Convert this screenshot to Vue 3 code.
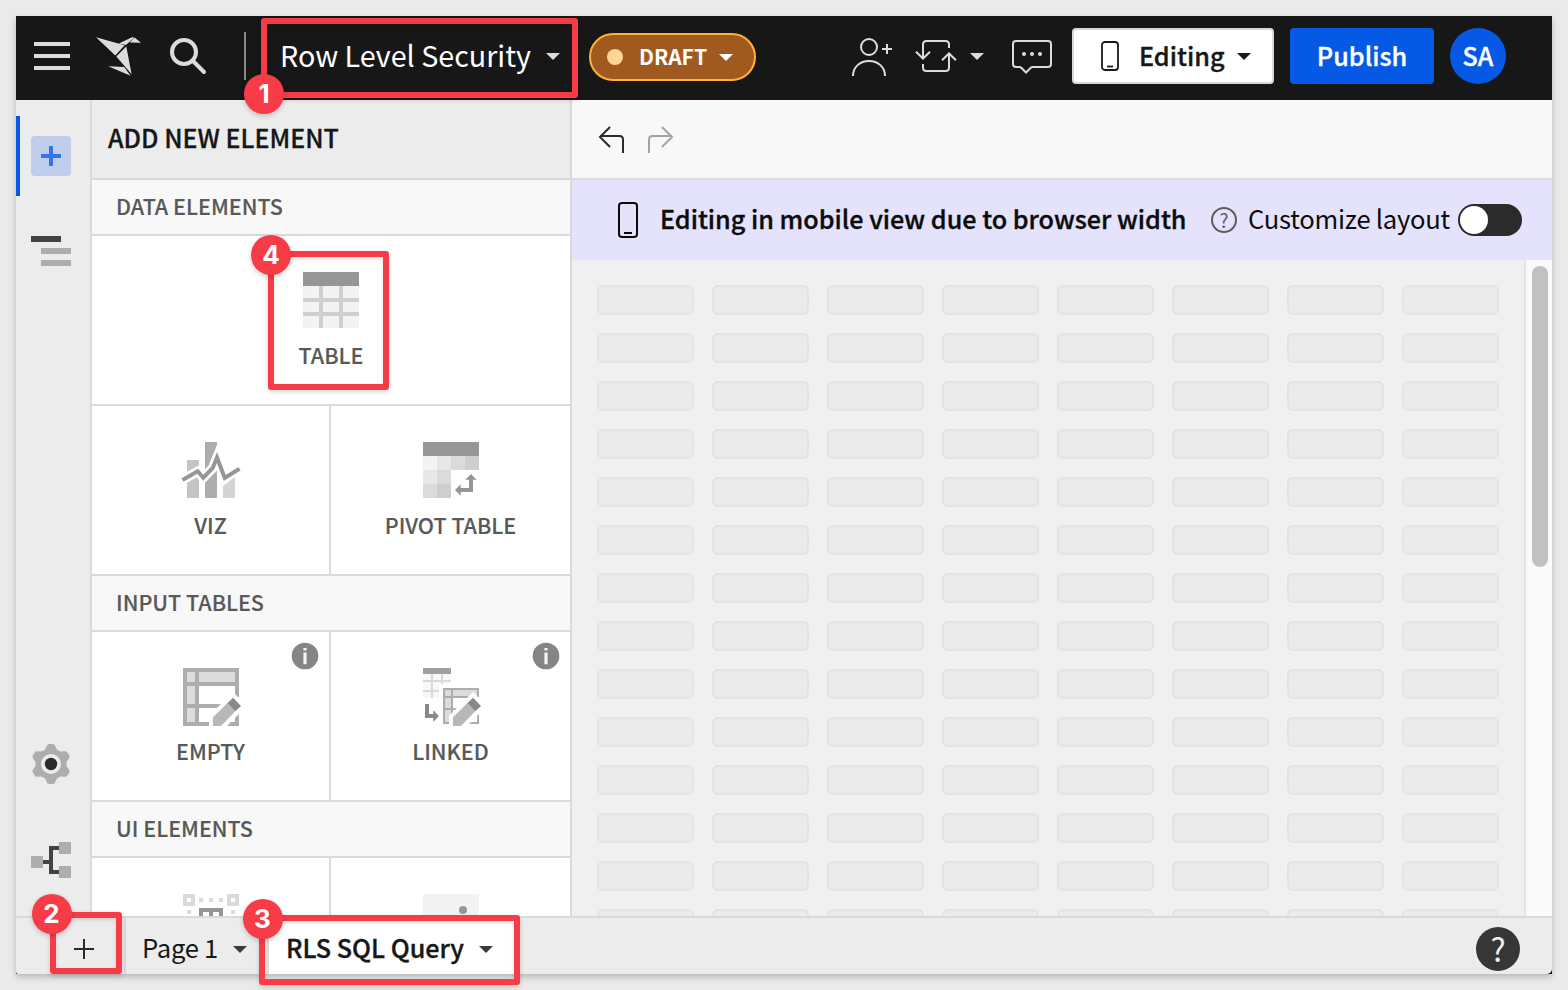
<script setup>
const cells = Array.from({ length: 14 * 8 }, (_, i) => i)
</script>

<template>
  <div class="page">
    <div class="window">
      <header class="topbar">
        <svg class="i-menu" width="36" height="28" viewBox="34 42 36 28"><path d="M34 44h36M34 56h36M34 68h36" stroke="#dcdcdc" stroke-width="4" /></svg>
        <svg class="i-bird" width="46" height="40" viewBox="96 36 46 40" fill="#dcdcdc">
          <path d="M96 37.2L124.600 45.200L115.300 55.400Z" />
          <path d="M118.800 43.600L132.600 37L134 38L125.800 44.900Z" />
          <path d="M134.600 37.600L141 42.700L129.800 42.400Z" />
          <path d="M116.300 56.500L126.200 46.500L127 50L131.600 74.200Z" />
          <path d="M108.200 66.200L124.200 67L130.600 75.700Z" />
        </svg>
        <svg class="i-search" width="38" height="38" viewBox="169 37 38 38" fill="none" stroke="#dcdcdc" stroke-width="4"><circle cx="184" cy="52" r="12" /><path d="M193 61L204 72" stroke-linecap="round" /></svg>
        <i class="vline"></i>
        <span class="t title">Row Level Security</span>
        <svg class="caret c-title" width="14" height="7" viewBox="0 0 14 7"><path d="M0 0H14L7 7Z" fill="#dcdcdc" /></svg>
        <div class="pill">
          <i class="dot"></i>
          <span class="t draft">DRAFT</span>
          <svg class="caret" width="14" height="7" viewBox="0 0 14 7"><path d="M0 0H14L7 7Z" fill="#fff" /></svg>
        </div>
        <div class="actions">
          <svg class="i-person" width="42" height="40" viewBox="852 37 42 40" fill="none" stroke="#dcdcdc" stroke-width="2"><circle cx="869" cy="47" r="8" /><path d="M853 76C853 67 860 61 869 61S885 67 885 76M882 49H892M887 44V54" /></svg>
          <svg class="i-sync" width="42" height="36" viewBox="915 38 42 36" fill="none" stroke="#dcdcdc" stroke-width="2"><path d="M923 58V44.500Q923 41 926.500 41H945.500Q949 41 949 44.500V48M916 51.800L923 58.500L930 51.800M949 54V67.500Q949 71 945.500 71H926.500Q923 71 923 67.500V64M942 60.200L949 53.500L956 60.200" /></svg>
          <svg class="caret c-sync" width="14" height="7" viewBox="0 0 14 7"><path d="M0 0H14L7 7Z" fill="#dcdcdc" /></svg>
          <svg class="i-chat" width="40" height="36" viewBox="1012 39 40 36" fill="none" stroke="#dcdcdc" stroke-width="2"><path d="M1016 41H1048Q1051 41 1051 44V64Q1051 67 1048 67H1033Q1031.500 67 1030.500 68L1026 72.500L1021.500 68Q1020.500 67 1019 67H1016Q1013 67 1013 64V44Q1013 41 1016 41Z" /><g fill="#dcdcdc" stroke="none"><circle cx="1024" cy="54" r="2" /><circle cx="1032" cy="54" r="2" /><circle cx="1040" cy="54" r="2" /></g></svg>
        </div>
        <div class="editing">
          <svg width="18" height="30" viewBox="0 0 18 30" fill="none" stroke="#1a1a1a" stroke-width="1.800"><rect x="1" y="1" width="16" height="28" rx="3" /><path d="M6 25.500H12" /></svg>
          <span class="t semi edit-t">Editing</span>
          <svg class="caret" width="14" height="7" viewBox="0 0 14 7"><path d="M0 0H14L7 7Z" fill="#1a1a1a" /></svg>
        </div>
        <div class="publish"><span class="t semi pub-t">Publish</span></div>
        <div class="avatar"><span class="t semi sa-t">SA</span></div>
      </header>

      <div class="body">
        <nav class="rail">
          <div class="active"><svg width="40" height="40" viewBox="0 0 40 40"><rect width="40" height="40" rx="4" fill="#c0ceec" /><path d="M10 20H30M20 10V30" stroke="#3376e9" stroke-width="4" /></svg></div>
          <svg class="i-outline" width="40" height="30" viewBox="0 0 40 30"><path d="M0 0H30V6H0Z" fill="#424242" /><path d="M10 12H40V18H10ZM10 24H40V30H10Z" fill="#adadad" /></svg>
          <svg class="i-gear" width="40" height="40" viewBox="-20 -20 40 40">
            <g fill="#adadad"><circle r="15.500" /><path id="tooth" d="M-6.500 -13L-4.500 -17.500Q-3.800 -20 -1.800 -20H1.800Q3.800 -20 4.500 -17.500L6.500 -13Z" /><use v-for="n in 5" :key="n" href="#tooth" :transform="`rotate(${n * 60})`" /></g>
            <circle r="10" fill="#ececec" /><circle r="6.200" fill="#2b2b2b" />
          </svg>
          <svg class="i-flow" width="40" height="36" viewBox="31 842 40 36"><path d="M43 862H51M60 848H51V872H60" fill="none" stroke="#424242" stroke-width="4" /><path d="M31 856h12v12h-12zM59 842h12v12h-12zM59 866h12v12h-12z" fill="#adadad" /></svg>
        </nav>

        <aside class="panel">
          <div class="panel-head"><span class="t add-t">ADD NEW ELEMENT</span></div>
          <div class="sec"><span class="t">DATA ELEMENTS</span></div>
          <div class="row">
            <div class="tile wide">
              <svg width="56" height="56" viewBox="0 0 56 56"><rect width="56" height="56" fill="#f3f3f3" /><path d="M16 14h4v42h-4zM36 14h4v42h-4zM0 26h56v4H0zM0 40h56v4H0z" fill="#cfcfcf" /><rect width="56" height="14" fill="#969696" /></svg>
              <span class="t">TABLE</span>
            </div>
          </div>
          <div class="row">
            <div class="tile">
              <svg class="nudge" width="56" height="56" viewBox="0 0 56 56"><path d="M4 18h12v38H4z" fill="#c4c4c4" /><path d="M22 0h12v56H22z" fill="#adadad" /><path d="M40 44L52 35V56H40z" fill="#d3d3d3" /><path d="M34 0L36 0V12L34 3Z" fill="#fff" /><path d="M.8 37.200L14.700 29.300L20.300 35.700L29.700 26L34 15.500L41.700 36L56.500 26.700" fill="none" stroke="#fff" stroke-width="9.500" /><path d="M-.5 38L14.700 29.300L20.300 35.700L29.700 26L34 15.500L41.700 36L56.500 26.700" fill="none" stroke="#969696" stroke-width="4" /></svg>
              <span class="t">VIZ</span>
            </div>
            <div class="tile">
              <svg class="nudge" width="56" height="56" viewBox="0 0 56 56"><path d="M0 0h56v14H0z" fill="#969696" /><path d="M0 14h14v14H0z" fill="#f3f3f3" /><path d="M14 14h14v14H14zM0 28h14v14H0z" fill="#e7e7e7" /><path d="M28 14h14v14H28zM14 28h14v14H14zM0 42h14v14H0z" fill="#dbdbdb" /><path d="M42 14h14v14H42zM14 42h14v14H14z" fill="#cfcfcf" /><path d="M48 32L53.700 37.700H50V50H37.700V53.700L32 48L37.700 42.300V46H46V37.700H42.300Z" fill="#969696" /></svg>
              <span class="t">PIVOT TABLE</span>
            </div>
          </div>
          <div class="sec"><span class="t">INPUT TABLES</span></div>
          <div class="row">
            <div class="tile">
              <svg class="nudge" width="56" height="56" viewBox="0 0 56 56">
                <path d="M0 0h56v58H0z" fill="#adadad" /><path d="M4 4h8v10H4zM16 4h36v10H16zM4 18h8v18H4zM4 40h8v14H4z" fill="#dcdcdc" /><path d="M16 18h36v18H16zM16 40h36v14H16z" fill="#fff" />
                <path d="M26 58.500V47.700L50 24L60 34V42L43.500 58.500Z" fill="#fff" /><path d="M30 58V49.300L44.300 35.300L52.300 43.300L38 58Z" fill="#b8b8b8" /><path d="M44.300 35.300L50 29.700L58 38L52.300 43.300Z" fill="#898989" />
              </svg>
              <span class="t">EMPTY</span>
              <svg class="info" width="28" height="28" viewBox="0 0 28 28"><circle cx="14" cy="14" r="13.300" fill="#858585" /><path d="M12.400 6h3.200v2.600h-3.200zM12.400 10.600h3.200v11.700h-3.200z" fill="#f4f4f4" /></svg>
            </div>
            <div class="tile">
              <svg class="nudge" width="56" height="56" viewBox="0 0 56 56">
                <path d="M0 6h28v24H0z" fill="#f8f8f8" /><path d="M8 6h2v24H8zM18 6h2v24H18zM0 12h28v2H0zM0 22h28v2H0z" fill="#dadada" /><path d="M0 0h28v6H0z" fill="#a0a0a0" />
                <path d="M16 16h16v20H16z" fill="#fff" /><path d="M20 20h36v36H20z" fill="#adadad" /><path d="M22 22h6v6h-6zM30 22h24v6H30zM22 30h6v10h-6zM22 42h6v12h-6z" fill="#dcdcdc" /><path d="M30 30h24v10H30zM30 42h24v12H30z" fill="#fff" />
                <path d="M26 58.500V47.700L50 24L60 34V42L43.500 58.500Z" fill="#fff" /><path d="M30 58V49.300L44.300 35.300L52.300 43.300L38 58Z" fill="#b8b8b8" /><path d="M44.300 35.300L50 29.700L58 38L52.300 43.300Z" fill="#898989" />
                <path d="M2 36H6V46H10.300V42.300L15.900 48L10.300 53.900V50H2Z" fill="#898989" />
              </svg>
              <span class="t">LINKED</span>
              <svg class="info" width="28" height="28" viewBox="0 0 28 28"><circle cx="14" cy="14" r="13.300" fill="#858585" /><path d="M12.400 6h3.200v2.600h-3.200zM12.400 10.600h3.200v11.700h-3.200z" fill="#f4f4f4" /></svg>
            </div>
          </div>
          <div class="sec"><span class="t">UI ELEMENTS</span></div>
          <div class="row">
            <div class="tile">
              <svg class="nudge" width="56" height="56" viewBox="0 0 56 56"><path d="M2 2h8v8H2zM46 2h8v8H46z" fill="none" stroke="#dadada" stroke-width="4" /><path d="M16 4h4v4h-4zM26 4h4v4h-4zM36 4h4v4h-4zM4 16h4v4H4zM48 16h4v4H48z" fill="#dadada" /><path d="M16 14H40V24H36V18H30V24H26V18H20V24H16Z" fill="#969696" /></svg>
            </div>
            <div class="tile">
              <svg class="nudge" width="56" height="56" viewBox="0 0 56 56"><rect width="56" height="56" fill="#f3f3f3" /><circle cx="40" cy="16" r="4" fill="#969696" /></svg>
            </div>
          </div>
        </aside>

        <main class="main">
          <div class="toolbar">
            <svg width="76" height="30" viewBox="598 125 76 30" fill="none" stroke-width="2"><path d="M610 127L600 137L610 147M600 136H619.500Q623 136 623 139.500V153" stroke="#2b2b2b" /><path d="M662 127L672 137L662 147M672 136H652.500Q649 136 649 139.500V153" stroke="#a3a3a3" /></svg>
          </div>
          <div class="banner">
            <svg width="20" height="36" viewBox="0 0 20 36" fill="none" stroke="#0c0c0c" stroke-width="2"><rect x="1" y="1" width="18" height="34" rx="3" /><path d="M6 31H14" /></svg>
            <span class="t semi ban-t">Editing in mobile view due to browser width</span>
            <span class="q">?</span>
            <span class="t cust-t">Customize layout</span>
            <i class="toggle"></i>
          </div>
          <div class="canvas">
            <div class="grid"><i v-for="c in cells" :key="c"></i></div>
            <div class="track"><i></i></div>
          </div>
        </main>
      </div>

      <footer class="tabs">
        <div class="newpage"><svg width="20" height="20" viewBox="0 0 20 20"><path d="M0 10H20M10 0V20" stroke="#2b2b2b" stroke-width="2" /></svg></div>
        <div class="tab p1"><span class="t p1-t">Page 1</span><svg class="caret" width="14" height="7" viewBox="0 0 14 7"><path d="M0 0H14L7 7Z" fill="#3a3a3a" /></svg></div>
        <div class="tab on"><span class="t semi rls-t">RLS SQL Query</span><svg class="caret" width="14" height="7" viewBox="0 0 14 7"><path d="M0 0H14L7 7Z" fill="#3a3a3a" /></svg></div>
        <div class="help"><span>?</span></div>
      </footer>
    </div>

    <div class="mark m1"></div><b class="num n1">1</b>
    <div class="mark m2"></div><b class="num n2">2</b>
    <div class="mark m3"></div><b class="num n3">3</b>
    <div class="mark m4"></div><b class="num n4">4</b>
  </div>
</template>

<style>
body { margin: 0; overflow: hidden; }
</style>

<style scoped>
* { box-sizing: border-box; }
.page { position: relative; width: 1568px; height: 990px; padding: 16px; overflow: hidden; background: #eaeaea; font-family: "Noto Sans CJK SC", "Noto Sans", sans-serif; }
.window { display: flex; flex-direction: column; width: 1536px; height: 958px; background: #000; box-shadow: 0 3px 6px rgba(0, 0, 0, .22); }
svg { display: block; flex: none; overflow: visible; }
i { display: block; flex: none; }
.t { white-space: nowrap; line-height: 1; flex: none; padding-bottom: 2px; }
.semi { font-weight: 500; -webkit-text-stroke: .35px currentColor; }

.topbar { display: flex; align-items: center; height: 84px; flex: none; padding-left: 18px; background: #171717; }
.i-menu { margin-top: -4px; }
.i-bird { margin: -4px 0 0 26px; }
.i-search { margin: -4px 0 0 27px; }
.vline { width: 2px; height: 48px; margin: -4px 0 0 37px; background: #8a8a8a; }
.title { width: 251px; margin: -4px 0 0 34px; font-size: 28.700px; color: #fff; }
.c-title { margin: -4px 0 0 15px; }
.pill { display: flex; align-items: center; width: 167px; height: 48px; margin: -2px 0 0 29px; padding-left: 16px; border: 2px solid #ffb13b; border-radius: 24px; background: #a0591e; }
.dot { width: 16px; height: 16px; border-radius: 50%; background: #ffd596; }
.draft { width: 68px; margin: 0 12px 0 16px; font-size: 21px; font-weight: 700; color: #fff; }
.actions { display: flex; align-items: center; margin: -4px 0 0 96px; }
.i-person { margin-top: 2px; }
.i-sync { margin-left: 21px; }
.c-sync { margin-left: 13px; }
.i-chat { margin: 2px 0 0 28px; }
.editing { display: flex; align-items: center; width: 202px; height: 56px; margin: -4px 0 0 20px; padding-left: 27px; border: 2px solid #d8d8d8; border-radius: 4px; background: #fff; }
.edit-t { width: 86px; margin: 0 12px 0 20px; font-size: 25.200px; color: #171717; }
.publish, .avatar { display: flex; align-items: center; justify-content: center; height: 56px; margin: -4px 0 0 16px; background: #0559e5; color: #fff; font-size: 25.200px; }
.editing .edit-t, .publish .pub-t { padding-bottom: 0; }
.publish { width: 144px; border-radius: 4px; }
.avatar { width: 56px; border-radius: 50%; font-size: 25px; }

.body { display: flex; height: 816px; flex: none; }
.rail { display: flex; flex-direction: column; width: 76px; flex: none; border-right: 2px solid #dadada; background: #ececec; }
.active { display: flex; align-items: center; width: 74px; height: 80px; margin-top: 16px; padding-left: 11px; border-left: 4px solid #0559e5; }
.i-outline { margin: 40px 0 0 15px; }
.i-gear { margin: 478px 0 0 15px; }
.i-flow { margin: 58px 0 0 15px; }

.panel { width: 480px; height: 816px; flex: none; overflow: hidden; border-right: 2px solid #dadada; background: #fff; }
.panel-head, .sec { display: flex; align-items: center; border-bottom: 2px solid #dadada; }
.panel-head { height: 80px; padding: 0 0 2px 16px; background: #ececec; font-size: 25px; font-weight: 500; color: #171717; -webkit-text-stroke: .3px currentColor; }
.sec { height: 56px; padding-left: 24px; background: #f8f8f8; font-size: 21.500px; font-weight: 500; color: #585858; -webkit-text-stroke: .15px currentColor; }
.row { display: flex; height: 170px; border-bottom: 2px solid #dadada; }
.tile { position: relative; display: flex; flex-direction: column; align-items: center; width: 239px; padding-top: 36px; font-size: 21.500px; font-weight: 500; color: #585858; -webkit-text-stroke: .15px currentColor; }
.tile:first-child:not(.wide) { border-right: 2px solid #dadada; }
.wide { width: 478px; }
.nudge { margin-left: 1px; }
.tile .t { margin-top: 16px; }
.info { position: absolute; top: 10px; right: 10px; }

.main { width: 980px; flex: none; display: flex; flex-direction: column; background: #f0f0f0; }
.toolbar { display: flex; align-items: center; height: 80px; flex: none; padding: 2px 0 0 26px; border-bottom: 2px solid #dadada; background: #f8f8f8; }
.banner { display: flex; align-items: center; height: 80px; flex: none; padding-left: 46px; background: #e5e3fb; color: #0c0c0c; }
.banner .cust-t, .tab .p1-t { padding-bottom: 4px; }
.ban-t { width: 527px; margin-left: 22px; font-size: 25.150px; }
.q { width: 26px; height: 26px; margin-left: 24px; border: 2px solid #5c5c5c; border-radius: 50%; font-size: 19px; line-height: 21px; text-align: center; color: #5c5c5c; }
.cust-t { width: 202px; margin-left: 11px; font-size: 25.600px; letter-spacing: -.25px; }
.toggle { width: 64px; height: 32px; margin-left: 8px; padding: 2px; border-radius: 16px; background: #2b2b2b; }
.toggle::before { content: ""; display: block; width: 28px; height: 28px; border-radius: 50%; background: #fff; }
.canvas { display: flex; height: 656px; overflow: hidden; }
.grid { display: grid; grid-template-columns: repeat(8, 97px); grid-auto-rows: 30px; gap: 18px; width: 954px; padding: 25px 0 0 25px; border-right: 2px solid #e4e4e4; }
.grid i { border: 2px solid #e3e3e3; border-radius: 6px; background: #ebebeb; }
.track { width: 26px; padding: 6px; background: #fafafa; }
.track i { width: 16px; height: 301px; border-radius: 8px; background: #c1c1c1; }

.tabs { display: flex; height: 58px; flex: none; border-top: 2px solid #dadada; border-radius: 0 0 5px 2px; background: #ececec; overflow: hidden; }
.newpage { display: flex; align-items: center; width: 110px; padding: 6px 0 0 58px; border-right: 2px solid #dadada; }
.tab { display: flex; align-items: center; color: #171717; font-size: 26px; padding-top: 6px; }
.p1 { width: 143px; padding-left: 16px; border-right: 2px solid #dadada; }
.p1-t { width: 75px; margin-right: 16px; font-size: 25.600px; letter-spacing: -.25px; }
.on { width: 248px; padding-left: 17px; background: #fff; }
.rls-t { width: 178px; margin-right: 15px; font-size: 25.150px; }
.help { width: 44px; height: 44px; margin: 9px 0 0 959px; border-radius: 50%; background: #363636; color: #eee; font-size: 32px; line-height: 42px; text-align: center; }

.mark { position: absolute; border: 6px solid #f73c47; border-radius: 3px; box-shadow: 0 2px 5px rgba(0, 0, 0, .16), inset 0 2px 4px rgba(0, 0, 0, .12); }
.m1 { left: 260.500px; top: 17.500px; width: 317.500px; height: 80.500px; }
.m2 { left: 49.500px; top: 911.500px; width: 72px; height: 62px; }
.m3 { left: 259px; top: 915px; width: 261px; height: 70px; }
.m4 { left: 267.500px; top: 250.500px; width: 121.500px; height: 139.500px; }
.num { position: absolute; width: 40px; height: 40px; border-radius: 50%; background: #f73c47; color: #fff; font: 700 26px/39px Inter, sans-serif; text-align: center; box-shadow: 0 2px 5px rgba(0, 0, 0, .2); }
.n1 { left: 244px; top: 74px; }
.n2 { left: 31.500px; top: 894px; }
.n3 { left: 242.500px; top: 899px; }
.n4 { left: 251px; top: 235px; }
</style>
